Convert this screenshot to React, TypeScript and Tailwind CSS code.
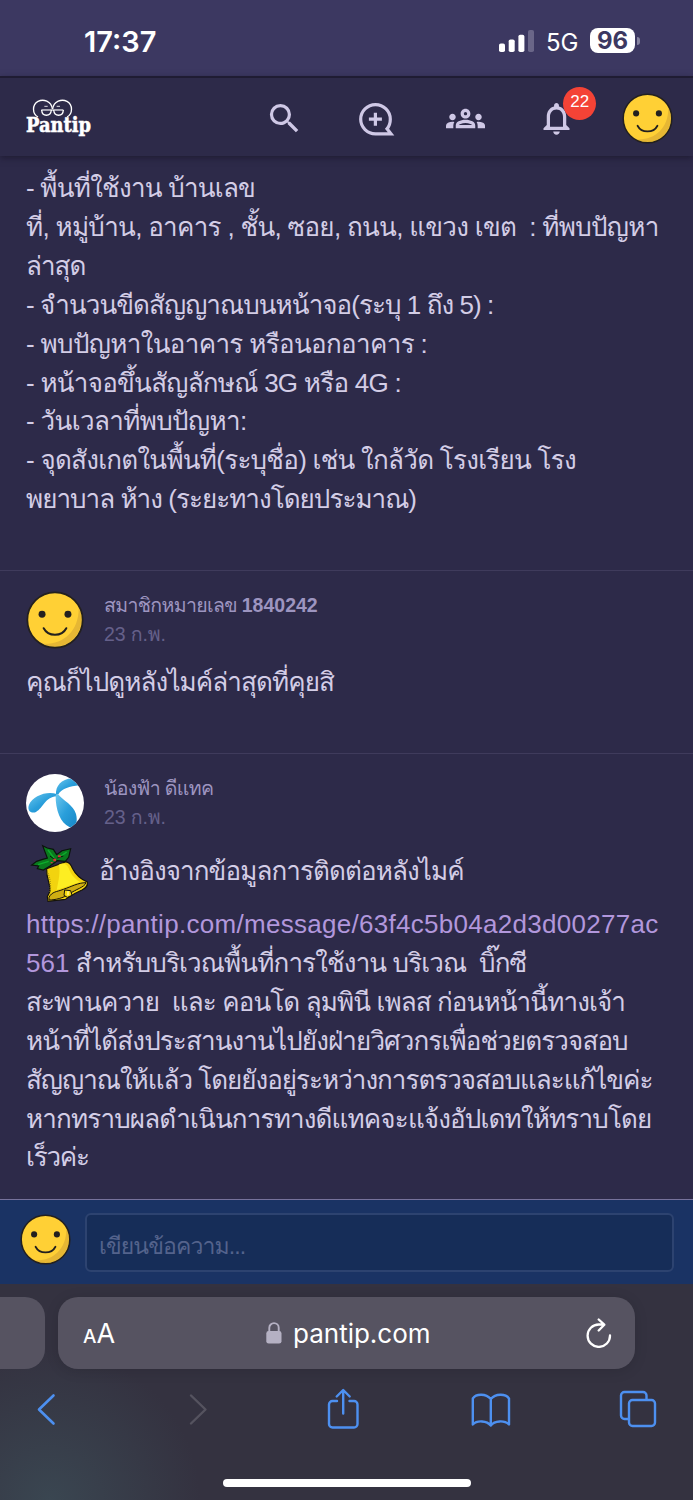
import type { ReactNode } from 'react'
import { MdNotificationsNone, MdOutlineGroups, MdSearch } from 'react-icons/md'

type Line = { text: ReactNode; tracking: string }

const questionLines: Line[] = [
  { text: '- พื้นที่ใช้งาน บ้านเลข', tracking: 'tracking-[-0.76px]' },
  { text: 'ที่, หมู่บ้าน, อาคาร , ชั้น, ซอย, ถนน, แขวง เขต  : ที่พบปัญหา', tracking: 'tracking-[-0.7px]' },
  { text: 'ล่าสุด', tracking: 'tracking-[-1px]' },
  { text: '- จำนวนขีดสัญญาณบนหน้าจอ(ระบุ 1 ถึง 5) :', tracking: 'tracking-[-0.94px]' },
  { text: '- พบปัญหาในอาคาร หรือนอกอาคาร :', tracking: 'tracking-[-0.66px]' },
  { text: '- หน้าจอขึ้นสัญลักษณ์ 3G หรือ 4G :', tracking: 'tracking-[-0.74px]' },
  { text: '- วันเวลาที่พบปัญหา:', tracking: 'tracking-[-0.63px]' },
  { text: '- จุดสังเกตในพื้นที่(ระบุชื่อ) เช่น ใกล้วัด โรงเรียน โรง', tracking: 'tracking-[-0.74px]' },
  { text: 'พยาบาล ห้าง (ระยะทางโดยประมาณ)', tracking: 'tracking-[-0.97px]' },
]

const replyLines: Line[] = [
  { text: <a className="text-[#b297dc]">https://pantip.com/message/63f4c5b04a2d3d00277ac</a>, tracking: 'tracking-[0.29px]' },
  { text: <><a className="tracking-normal text-[#b297dc]">561</a> สำหรับบริเวณพื้นที่การใช้งาน บริเวณ  บิ๊กซี</>, tracking: 'tracking-[-0.87px]' },
  { text: 'สะพานควาย  และ คอนโด ลุมพินี เพลส ก่อนหน้านี้ทางเจ้า', tracking: 'tracking-[-0.89px]' },
  { text: 'หน้าที่ได้ส่งประสานงานไปยังฝ่ายวิศวกรเพื่อช่วยตรวจสอบ', tracking: 'tracking-[-0.88px]' },
  { text: 'สัญญาณให้แล้ว โดยยังอยู่ระหว่างการตรวจสอบและแก้ไขค่ะ', tracking: 'tracking-[-1px]' },
  { text: 'หากทราบผลดำเนินการทางดีแทคจะแจ้งอัปเดทให้ทราบโดย', tracking: 'tracking-[-0.84px]' },
  { text: 'เร็วค่ะ', tracking: 'tracking-[-1.2px]' },
]

function Lines({ lines }: { lines: Line[] }) {
  return (
    <div className="text-[26px] leading-[38.9px] whitespace-pre text-[#d3cde6]">
      {lines.map((line, i) => (
        <p key={i} className={line.tracking}>{line.text}</p>
      ))}
    </div>
  )
}

function Smiley({ className }: { className?: string }) {
  return (
    <svg viewBox="0 0 60 60" className={className}>
      <circle cx="30" cy="30" r="28.6" fill="#ffd035" />
      <path d="M54.5 17A28 28 0 0 1 17 54.6C38 56 55 42 54.5 17Z" fill="#e6b734" />
      <circle cx="30" cy="30" r="28.6" fill="none" stroke="#23201f" strokeWidth="1.8" />
      <circle cx="16.6" cy="24" r="3.6" fill="#23201f" />
      <circle cx="43.4" cy="24" r="3.6" fill="#23201f" />
      <path d="M18.3 38.5C23 47.5 37 47.5 41.7 38.5" fill="none" stroke="#23201f" strokeWidth="2.1" strokeLinecap="round" />
    </svg>
  )
}

function PantipLogo() {
  return (
    <svg viewBox="75 55 204 124" className="mt-[2px] h-[41.3px] w-[68px]">
      <g fill="none" stroke="#fff" strokeWidth="4">
        <path d="M114 112C96 103 96 75 114 65C130 57 154 64 157 88" />
        <path d="M201 112C219 103 219 75 201 65C185 57 161 64 158 88" />
        <path d="M124 91H190" strokeWidth="3.5" />
        <path d="M125 91C126 112 152 112 154 91" />
        <path d="M161 91C163 112 189 112 190 91" />
        <path d="M133 80H143M170 80H180" strokeWidth="2.5" />
      </g>
      <text x="78" y="157" textLength="195" lengthAdjust="spacingAndGlyphs" fontSize="60" fontWeight="700" fill="#fff" stroke="#fff" strokeWidth="1.5" className="font-['DejaVu_Serif_Condensed','DejaVu_Serif',serif]">
        Pantip
      </text>
    </svg>
  )
}

function DtacAvatar() {
  return (
    <svg viewBox="78 642 174 174" className="size-[58px] rounded-full bg-white">
      <defs>
        <linearGradient id="leaf" x1="0" y1="0" x2="1" y2="1">
          <stop offset="0" stopColor="#6cc7ee" />
          <stop offset="0.5" stopColor="#2a9fdb" />
          <stop offset="1" stopColor="#1787c6" />
        </linearGradient>
      </defs>
      <path d="M168 703C166 678 186 652 224 656L238 676C208 680 188 684 174 704Z" fill="url(#leaf)" />
      <path d="M170 702C140 692 98 708 87 734C80 752 94 762 108 756C130 744 134 712 170 709Z" fill="url(#leaf)" />
      <path d="M167 706C166 750 182 790 208 801C228 808 234 786 228 762C220 735 190 722 174 703Z" fill="url(#leaf)" />
    </svg>
  )
}

function BellSticker() {
  return (
    <svg viewBox="90 42 180 176" className="mt-1 mr-[9px] ml-1 h-[58.7px] w-[60px]">
      <path d="M140 116L192 97C204 92 212 102 218 116C228 136 240 146 262 156C264 166 258 174 246 180C222 190 208 200 196 208L144 214L142 200L150 184C152 160 138 146 140 116Z" fill="#f2d30f" stroke="#15130a" strokeWidth="3.5" />
      <path d="M176 104C196 94 204 108 210 124C217 140 230 150 240 156L170 180C176 150 182 124 176 104Z" fill="#fdee22" />
      <path d="M144 130C151 146 153 168 150 190" fill="none" stroke="#a8920f" strokeWidth="4" strokeDasharray="3 3" />
      <path d="M147 202C156 184 170 186 190 178C214 170 234 158 258 158C254 172 226 178 208 192C190 204 166 210 147 210Z" fill="#cfae12" stroke="#15130a" strokeWidth="3" />
      <path d="M194 180L212 182L216 196L202 202L192 196Z" fill="#f5d90f" stroke="#15130a" strokeWidth="3" />
      <path d="M204 184V196" stroke="#fff6a0" strokeWidth="4" />
      <path d="M128 47L142 54L160 58L170 74L186 62L212 56L206 82L196 94L172 92L150 108L130 120L112 116L116 108L95 105L110 94L128 88L142 84Z" fill="#0a7a1e" stroke="#0b120c" strokeWidth="3.5" />
      <path d="M144 60L162 84M200 66L178 82M114 104L146 94" stroke="#0cae2c" strokeWidth="4" />
      <path d="M150 78L166 90M172 84L190 78" stroke="#0b120c" strokeWidth="3" />
      <path d="M160 86H168V94H160ZM174 76H182V82H174ZM152 96H158V100H152Z" fill="#d8323c" />
    </svg>
  )
}

function StatusBar() {
  return (
    <div className="flex h-[76px] items-start bg-[#3c3861] pt-[24px] font-['Inter',sans-serif] text-white">
      <span className="ml-[84px] w-[415px] text-[29px] leading-[35px] font-semibold">17:37</span>
      <svg viewBox="0 0 36 22" className="mt-[6px] h-[22px] w-[36px]" fill="#fff">
        <rect x="0" y="13.5" width="6" height="8.5" rx="1.8" />
        <rect x="9.7" y="9.5" width="6" height="12.5" rx="1.8" />
        <rect x="19.4" y="4.7" width="6" height="17.3" rx="1.8" />
        <rect x="29" y="0" width="6" height="22" rx="1.8" fill="#6a6688" />
      </svg>
      <span className="ml-[11px] w-[44px] text-[24px] leading-[37px]">5G</span>
      <span className="mt-[4px] h-[25px] w-[45px] rounded-[8px] bg-white text-center text-[24px] leading-[26px] font-bold text-[#3c3861]">96</span>
      <span className="mt-[13px] ml-[2px] h-[8px] w-[3px] rounded-r-full bg-[#8683a0]" />
    </div>
  )
}

function NavBar() {
  return (
    <header className="flex h-[80px] items-center border-t-2 border-[#1f1c33] bg-[#2d2a49] pt-[2px] shadow-[0_2px_6px_rgba(20,16,35,0.55)]">
      <div className="w-[239px] pl-[25px]">
        <PantipLogo />
      </div>
      <div className="grid flex-1 grid-cols-5 place-items-center text-[#cfc8e6]">
        <MdSearch className="size-[39px]" />
        <svg viewBox="0 0 39 39" className="size-[39px]" fill="none" stroke="currentColor" strokeWidth="3.2">
          <path d="M35 34.8H19.5A14.8 14.6 0 1 1 34.3 20.2C34.3 24 33 27.500 31 29.800Z" />
          <path d="M19.400 13.700V26.700M12.900 20.200H25.900" />
        </svg>
        <MdOutlineGroups className="size-[39px]" />
        <div className="relative">
          <MdNotificationsNone className="size-[39px]" />
          <span className="absolute -top-[12px] left-[26px] flex size-[33px] items-center justify-center rounded-full bg-[#f44336] pb-[3px] text-[17px] text-white">
            22
          </span>
        </div>
        <Smiley className="size-[51px]" />
      </div>
    </header>
  )
}

function Author({ avatar, name, date }: { avatar: ReactNode; name: ReactNode; date: string }) {
  return (
    <div className="flex">
      <div className="w-[78px]">{avatar}</div>
      <div className="text-[19.5px] leading-[29px] whitespace-pre">
        <p className="tracking-[-0.65px] text-[#9d95c0]">{name}</p>
        <p className="tracking-[-0.1px] text-[#65608a]">{date}</p>
      </div>
    </div>
  )
}

function ReplyBar() {
  return (
    <div className="flex h-[85px] border-t border-[#76729b] bg-[#1a3364] pl-[20px]">
      <Smiley className="mt-[14px] size-[51px]" />
      <div className="mt-[13px] ml-[14px] h-[59px] w-[589px] rounded-[6px] border-2 border-[#2d4370] bg-[#162d58] pl-[12px] text-[23px] leading-[62px] tracking-[-0.9px] text-[#54638c]">
        เขียนข้อความ...
      </div>
    </div>
  )
}

function SafariBar() {
  return (
    <footer className="flex h-[216px] flex-col bg-[#343240] bg-[radial-gradient(circle_at_50px_216px,#3a4651_0px,#343240_150px)] pt-[13px] font-['Inter',sans-serif]">
      <div className="flex h-[72px] gap-[13px]">
        <div className="w-[45px] rounded-r-[20px] bg-[#565361]" />
        <div className="flex w-[577px] items-center rounded-[20px] bg-[#565361] text-white shadow-[0_2px_14px_rgba(0,0,0,0.12)]">
          <span className="w-[208px] pl-[25px] leading-none">
            <span className="text-[19px] font-medium">A</span>
            <span className="text-[27px]">A</span>
          </span>
          <svg viewBox="0 0 16 22" className="h-[22px] w-[16px]">
            <path d="M3.3 10V5.8a4.7 4.7 0 0 1 9.4 0V10" fill="none" stroke="#b5b1c3" strokeWidth="1.9" />
            <rect x="0.3" y="9" width="15.2" height="12.6" rx="2.4" fill="#b5b1c3" />
          </svg>
          <span className="ml-[11px] w-[293px] text-[26px]">pantip.com</span>
          <svg viewBox="0 0 26 30" className="h-[30px] w-[26px]" fill="none" stroke="#fff" strokeWidth="2.3" strokeLinecap="round" strokeLinejoin="round">
            <path d="M24 17.5A11.2 11.2 0 1 1 12.800 6.500H18M12.700 1.500L18.300 6.700L12.700 12.500" />
          </svg>
        </div>
      </div>
      <svg viewBox="0 0 693 60" className="mt-[12px] h-[60px] w-[693px]" fill="none" stroke="#4d90f0" strokeWidth="2.4" strokeLinecap="round" strokeLinejoin="round">
        <path d="M53.5 14.5L39 28.5L53.5 42.5" strokeWidth="2.6" />
        <path d="M191 14.5L205.5 28.5L191 42.5" stroke="#55535f" />
        <path d="M337 20H332.5A3.5 3.5 0 0 0 329 23.5V43A3.5 3.5 0 0 0 332.5 46.5H354A3.5 3.5 0 0 0 357.5 43V23.5A3.5 3.5 0 0 0 354 20H349.5M343.2 32.5V9.5M336.7 15.5L343.2 9L349.7 15.5" />
        <path d="M490.8 18C486 12.5 476 12.5 472.8 17.5V43.5C477 39 487 39.5 490.8 44.5C494.500 39.5 504.500 39 509 43.5V17.5C505.500 12.5 495.500 12.5 490.8 18ZM490.8 18V44" />
        <path d="M628 38H624.500A3.5 3.5 0 0 1 621 34.5V14.5A3.5 3.5 0 0 1 624.500 11H643A3.5 3.5 0 0 1 646.500 14.5V18.5" />
        <rect x="629" y="19" width="26" height="26" rx="3.5" />
      </svg>
      <div className="mx-auto mt-[38px] h-[8px] w-[248px] rounded-full bg-white" />
    </footer>
  )
}

export default function App() {
  return (
    <div className="flex h-[1500px] w-[693px] flex-col overflow-hidden bg-[#2d2a49] font-['Liberation_Sans','Loma',sans-serif]">
      <StatusBar />
      <NavBar />
      <main className="flex h-[1043px] flex-col">
        <section className="h-[415px] border-b border-[#3f3b5c] px-[26px] pt-[13px]">
          <Lines lines={questionLines} />
        </section>
        <section className="h-[183px] border-b border-[#3f3b5c] px-[26px] pt-[20px]">
          <Author
            avatar={<Smiley className="size-[58px]" />}
            name={<>สมาชิกหมายเลข <b className="tracking-normal">1840242</b></>}
            date="23 ก.พ."
          />
          <div className="mt-[14px]">
            <Lines lines={[{ text: 'คุณก็ไปดูหลังไมค์ล่าสุดที่คุยสิ', tracking: 'tracking-[-0.9px]' }]} />
          </div>
        </section>
        <section className="px-[26px] pt-[20px]">
          <Author avatar={<DtacAvatar />} name="น้องฟ้า ดีแทค" date="23 ก.พ." />
          <div className="mt-[5px] flex h-[68px] items-center">
            <BellSticker />
            <Lines lines={[{ text: 'อ้างอิงจากข้อมูลการติดต่อหลังไมค์', tracking: 'tracking-[-0.9px]' }]} />
          </div>
          <Lines lines={replyLines} />
        </section>
      </main>
      <ReplyBar />
      <SafariBar />
    </div>
  )
}
